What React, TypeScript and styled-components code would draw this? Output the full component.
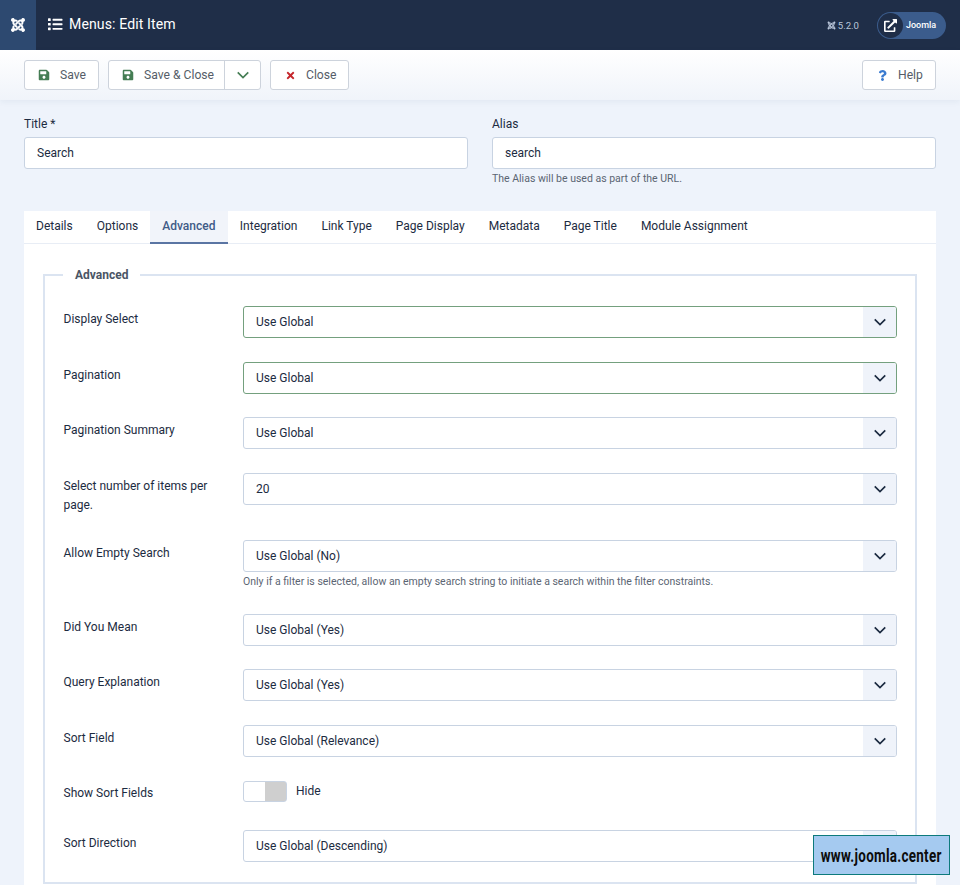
import React from 'react'
import styled, { createGlobalStyle } from 'styled-components'
import { FaJoomla, FaList, FaSave, FaTimes, FaQuestion, FaExternalLinkAlt } from 'react-icons/fa'

const GlobalStyle = createGlobalStyle`
  html, body {
    margin: 0;
    padding: 0;
    background: #eef3fb;
    font-family: Roboto, "Liberation Sans", sans-serif;
    font-size: 12px;
    color: #1c2b41;
    overflow: hidden;
  }
  * { box-sizing: border-box; }
`

const Page = styled.div`
  position: relative;
  width: 960px;
  height: 885px;
  overflow: hidden;
`

const Header = styled.header`
  display: flex;
  align-items: center;
  height: 50px;
  background: #1f2e48;
  color: #fff;
`

const Brand = styled.div`
  display: flex;
  align-items: center;
  justify-content: center;
  width: 36px;
  height: 50px;
  background: #2d4970;
  font-size: 16px;
`

const PageTitle = styled.h1`
  display: flex;
  align-items: center;
  gap: 6.5px;
  margin: -2px 0 0 12px;
  font-size: 14.1px;
  font-weight: 400;
  letter-spacing: 0.1px;
`

const HeaderRight = styled.div`
  display: flex;
  align-items: center;
  margin-left: auto;
  margin-right: 14px;
`

const Version = styled.span`
  display: flex;
  align-items: center;
  gap: 2px;
  font-size: 9.6px;
  color: #b9c6da;
  margin-right: 18px;
`

const UserPill = styled.div`
  display: flex;
  align-items: center;
  width: 69px;
  height: 27px;
  border-radius: 14px;
  background: #3b5c8c;
  font-size: 9px;
  font-weight: 500;
  gap: 3px;
  padding-left: 1px;
`

const PillIcon = styled.span`
  display: flex;
  align-items: center;
  justify-content: center;
  width: 25px;
  height: 25px;
  border-radius: 50%;
  background: #1f2e48;
  font-size: 13px;
`

const Toolbar = styled.div`
  display: flex;
  align-items: center;
  height: 50px;
  padding: 0 24px;
  gap: 9px;
  background: linear-gradient(#ffffff, #f0f4fa);
  box-shadow: 0 2px 6px rgba(40, 60, 100, 0.06);
`

const ToolButton = styled.div`
  display: flex;
  align-items: center;
  height: 30.5px;
  background: #fff;
  border: 1px solid #cdd3dc;
  border-radius: 3px;
  color: #555d68;
  font-size: 12.15px;
`

const ToolLabel = styled.span<{ $w: number }>`
  display: flex;
  align-items: center;
  gap: 10px;
  width: ${p => p.$w}px;
  padding-left: 13px;
  height: 100%;
`

const ToolIcon = styled.span<{ $c: string; $size?: number }>`
  display: flex;
  justify-content: center;
  width: 12px;
  color: ${p => p.$c};
  font-size: ${p => p.$size ?? 12}px;
`

const Caret = styled.span`
  display: flex;
  align-items: center;
  justify-content: center;
  width: 36px;
  height: 100%;
  border-left: 1px solid #cdd3dc;
  color: #457d54;
`

const HelpButton = styled(ToolButton)`
  margin-left: auto;
`

const TopFields = styled.div`
  display: grid;
  grid-template-columns: 444px 444px;
  column-gap: 24px;
  padding: 15px 24px 0;
`

const Field = styled.div`
  display: flex;
  flex-direction: column;
`

const FieldLabel = styled.label`
  height: 22px;
  line-height: 19px;
`

const Input = styled.div`
  display: flex;
  align-items: center;
  height: 32px;
  padding-left: 12px;
  background: #fff;
  border: 1px solid #c8d3e2;
  border-radius: 3px;
`

const Hint = styled.div`
  margin-top: 3px;
  line-height: 14px;
  font-size: 10.5px;
  color: #5b6573;
`

const RowHint = styled(Hint)`
  margin: 2.5px 0 1.5px;
`

const Card = styled.section`
  margin: 25px 24px 0;
  background: #fff;
  padding-bottom: 20px;
`

const TabBar = styled.nav`
  display: flex;
  height: 33px;
  border-bottom: 1px solid #e8edf5;
`

const Tab = styled.div<{ $active?: boolean }>`
  display: flex;
  align-items: center;
  height: ${p => (p.$active ? 33 : 32)}px;
  min-width: ${p => (p.$active ? '77.6px' : '0')};
  padding: 0 12px ${p => (p.$active ? 1 : 2)}px;
  font-weight: ${p => (p.$active ? 500 : 400)};
  color: ${p => (p.$active ? '#3f5b87' : '#1c2b41')};
  background: ${p => (p.$active ? '#f1f4fa' : 'transparent')};
  border-bottom: ${p => (p.$active ? '2px solid #5a75a3' : 'none')};
`

const Fieldset = styled.fieldset`
  margin: 24px 19px 0;
  padding: 24px 18px 20px 18.5px;
  border: 2px solid #dbe4f1;
  border-radius: 0;
  min-width: 0;
`

const Legend = styled.legend`
  margin-left: -0.5px;
  padding: 0 12px;
  font-weight: 700;
  font-size: 12px;
  color: #4a5565;
`

const Row = styled.div<{ $minH?: number }>`
  display: grid;
  grid-template-columns: 179.5px 1fr;
  margin-bottom: 23.5px;
  min-height: ${p => p.$minH ?? 32}px;

  &:last-child {
    margin-bottom: 0;
  }
`

const SwitchRow = styled(Row)`
  padding-top: 0.5px;
`

const RowLabel = styled.div<{ $top?: number }>`
  padding-top: ${p => p.$top ?? 4}px;
  padding-right: 14px;
  line-height: 19.2px;
`

const Select = styled.div<{ $valid?: boolean }>`
  position: relative;
  display: flex;
  align-items: center;
  height: 32px;
  padding-left: 12px;
  background: #fff;
  border: 1px solid ${p => (p.$valid ? '#74a07e' : '#c8d3e2')};
  border-radius: 3px;
  overflow: hidden;
`

const SelectCaret = styled.span`
  position: absolute;
  top: 0;
  right: 0;
  bottom: 0;
  display: flex;
  align-items: center;
  justify-content: center;
  width: 33px;
  background: #eff3fa;
  color: #1c2b41;
`

const Switch = styled.div`
  display: flex;
  align-items: flex-start;
  gap: 9px;
  line-height: 20.5px;
`

const SwitchTrack = styled.span`
  display: block;
  width: 44px;
  height: 21px;
  background: linear-gradient(90deg, #fff 50%, #cfcfcf 50%);
  border: 1px solid #c8d3e2;
  border-radius: 3px;
`

const Watermark = styled.div`
  position: absolute;
  left: 813px;
  top: 835px;
  display: flex;
  align-items: center;
  justify-content: center;
  width: 137px;
  height: 40px;
  background: #a5caf0;
  border: 1px solid #0d7a7c;
  color: #0c0c0c;
`

const WatermarkText = styled.span`
  display: inline-block;
  white-space: nowrap;
  font-family: Roboto, sans-serif;
  font-weight: 700;
  font-size: 18px;
  letter-spacing: 0.4px;
  transform: scaleX(0.745);
`

function Chevron({ size = 14 }: { size?: number }) {
  return (
    <svg width={size} height={size} viewBox="0 0 16 16" fill="none" stroke="currentColor" strokeWidth="1.9">
      <path d="M2 5l6 6 6-6" />
    </svg>
  )
}

const rows = [
  { label: 'Display Select', value: 'Use Global', valid: true },
  { label: 'Pagination', value: 'Use Global', valid: true },
  { label: 'Pagination Summary', value: 'Use Global' },
  { label: 'Select number of items per page.', value: '20', minH: 44.2 },
  {
    label: 'Allow Empty Search',
    value: 'Use Global (No)',
    hint: 'Only if a filter is selected, allow an empty search string to initiate a search within the filter constraints.',
  },
  { label: 'Did You Mean', value: 'Use Global (Yes)' },
  { label: 'Query Explanation', value: 'Use Global (Yes)' },
  { label: 'Sort Field', value: 'Use Global (Relevance)' },
]

const tabs = ['Details', 'Options', 'Advanced', 'Integration', 'Link Type', 'Page Display', 'Metadata', 'Page Title', 'Module Assignment']

function SelectBox({ value, valid }: { value: string; valid?: boolean }) {
  return (
    <Select $valid={valid}>
      {value}
      <SelectCaret>
        <Chevron />
      </SelectCaret>
    </Select>
  )
}

export default function App() {
  return (
    <Page>
      <GlobalStyle />
      <Header>
        <Brand>
          <FaJoomla />
        </Brand>
        <PageTitle>
          <FaList size={14.5} />
          Menus: Edit Item
        </PageTitle>
        <HeaderRight>
          <Version>
            <FaJoomla size={9} />
            5.2.0
          </Version>
          <UserPill>
            <PillIcon>
              <FaExternalLinkAlt />
            </PillIcon>
            Joomla
          </UserPill>
        </HeaderRight>
      </Header>

      <Toolbar>
        <ToolButton>
          <ToolLabel $w={73}>
            <ToolIcon $c="#457d54"><FaSave /></ToolIcon>
            Save
          </ToolLabel>
        </ToolButton>
        <ToolButton>
          <ToolLabel $w={115}>
            <ToolIcon $c="#457d54"><FaSave /></ToolIcon>
            Save &amp; Close
          </ToolLabel>
          <Caret><Chevron /></Caret>
        </ToolButton>
        <ToolButton>
          <ToolLabel $w={77}>
            <ToolIcon $c="#c5262c" $size={11}><FaTimes /></ToolIcon>
            Close
          </ToolLabel>
        </ToolButton>
        <HelpButton>
          <ToolLabel $w={72}>
            <ToolIcon $c="#3a7bd0" $size={11}><FaQuestion /></ToolIcon>
            Help
          </ToolLabel>
        </HelpButton>
      </Toolbar>

      <TopFields>
        <Field>
          <FieldLabel>Title *</FieldLabel>
          <Input>Search</Input>
        </Field>
        <Field>
          <FieldLabel>Alias</FieldLabel>
          <Input>search</Input>
          <Hint>The Alias will be used as part of the URL.</Hint>
        </Field>
      </TopFields>

      <Card>
        <TabBar>
          {tabs.map(t => (
            <Tab key={t} $active={t === 'Advanced'}>{t}</Tab>
          ))}
        </TabBar>
        <Fieldset>
          <Legend>Advanced</Legend>
          {rows.map(r => (
            <Row key={r.label} $minH={r.minH}>
              <RowLabel>{r.label}</RowLabel>
              <div>
                <SelectBox value={r.value} valid={r.valid} />
                {r.hint && <RowHint>{r.hint}</RowHint>}
              </div>
            </Row>
          ))}
          <SwitchRow $minH={26.3}>
            <RowLabel $top={3}>Show Sort Fields</RowLabel>
            <Switch>
              <SwitchTrack />
              Hide
            </Switch>
          </SwitchRow>
          <Row>
            <RowLabel>Sort Direction</RowLabel>
            <SelectBox value="Use Global (Descending)" />
          </Row>
        </Fieldset>
      </Card>
      <Watermark>
        <WatermarkText>www.joomla.center</WatermarkText>
      </Watermark>
    </Page>
  )
}
